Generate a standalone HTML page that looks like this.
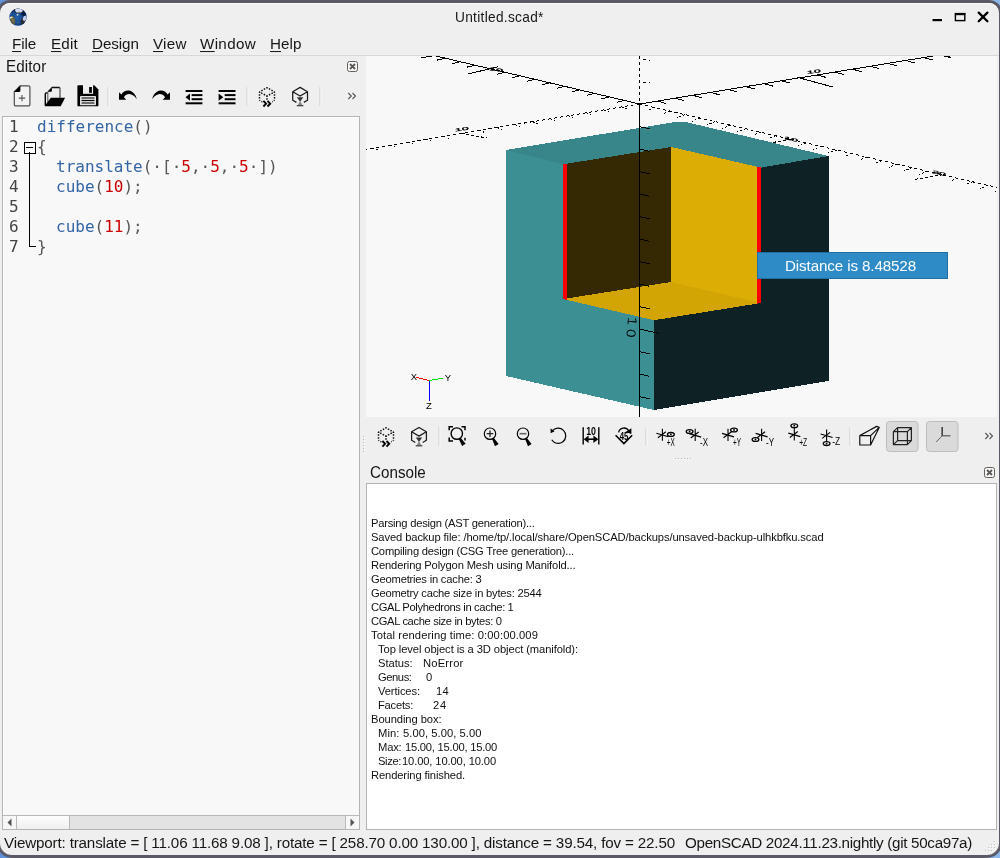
<!DOCTYPE html>
<html><head><meta charset="utf-8"><title>Untitled.scad*</title>
<style>
*{box-sizing:border-box;margin:0;padding:0}
html,body{width:1000px;height:858px;overflow:hidden}
body{background:linear-gradient(90deg,#5f90d8,#8db6ea);font-family:"Liberation Sans","DejaVu Sans",sans-serif;font-size:15px;color:#161616;position:relative}
.abs{position:absolute}
svg.abs{will-change:transform}
#frame{position:absolute;left:-3px;top:0;width:1005px;height:858px;background:#5b5965;border-radius:13px 13px 15px 15px}
#win{position:absolute;left:0;top:3px;width:999px;height:852px;background:#efefef;border-radius:10px 10px 12px 12px;overflow:hidden;box-shadow:inset 0 1px 0 #fbfbfb}
.t{position:absolute;white-space:pre;will-change:transform}
.t u{text-decoration:underline;text-underline-offset:2px;text-decoration-thickness:1px}
.code{font-family:"DejaVu Sans Mono","Liberation Mono",monospace;font-size:16px;line-height:19px}
.ln{color:#444}
.kw{color:#3465a4}.num{color:#cc0000}.pn{color:#555753}.ws{color:#555753}
</style></head><body>
<div id="frame"></div>
<div id="win"></div>
<svg class="abs" style="left:6px;top:5px" width="24" height="24" viewBox="6 5 24 24"><defs><radialGradient id="lg" cx="0.42" cy="0.55" r="0.6"><stop offset="0" stop-color="#2260aa"/><stop offset="0.6" stop-color="#18498f"/><stop offset="1" stop-color="#0a2555"/></radialGradient><clipPath id="lc"><circle cx="18" cy="17.1" r="8.7"/></clipPath></defs><circle cx="18" cy="17.1" r="8.7" fill="url(#lg)"/><g clip-path="url(#lc)"><ellipse cx="23.8" cy="13.6" rx="2.6" ry="2.4" fill="#0a1d48"/><ellipse cx="18.8" cy="10.2" rx="5.4" ry="2.9" fill="#1d2436"/><ellipse cx="18.9" cy="10.2" rx="3.7" ry="2.5" fill="#d3daf2"/><ellipse cx="19.2" cy="12.3" rx="1.6" ry="0.6" fill="#7d7850"/><ellipse cx="12.5" cy="20.4" rx="2.7" ry="4.4" transform="rotate(-14 12.5 20.4)" fill="#5f5c40"/><ellipse cx="12.9" cy="20" rx="1.3" ry="2.6" transform="rotate(-14 12.9 20)" fill="#77734e"/><ellipse cx="11" cy="17.6" rx="1.7" ry="0.8" transform="rotate(-20 11 17.6)" fill="#ecead6"/><ellipse cx="23.3" cy="20.4" rx="2.2" ry="3.9" transform="rotate(24 23.3 20.4)" fill="#2a2d33"/><ellipse cx="24.7" cy="18.3" rx="1.7" ry="2.7" transform="rotate(20 24.7 18.3)" fill="#c7cff0"/><circle cx="17.6" cy="14.8" r="0.95" fill="#d6d4c0"/><ellipse cx="18" cy="22.4" rx="0.8" ry="0.5" fill="#7e7a62"/><ellipse cx="10.9" cy="13.6" rx="0.5" ry="0.9" fill="#6f8fc8"/></g></svg>
<svg class="abs" style="left:925px;top:6px" width="70" height="22" viewBox="925 6 70 22"><rect x="932.5" y="19" width="9.5" height="2.2" fill="#000"/><rect x="955.4" y="13.6" width="9.4" height="7" fill="none" stroke="#000" stroke-width="1.4"/><rect x="954.9" y="13" width="10.4" height="2.2" fill="#000"/><path d="M978.7 12.6 L987.4 21.2 M987.4 12.6 L978.7 21.2" stroke="#000" stroke-width="2.3" stroke-linecap="round"/></svg>
<div class="abs" style="left:0;top:55px;width:999px;height:1px;background:#d8d8d8"></div>
<div class="abs" style="left:2px;top:116px;width:358px;height:714px;border:1px solid #b4b4b4;background:#f8f8f8;box-shadow:inset 1px 1px 0 #fff"></div>
<div class="abs" style="left:3px;top:815px;width:356px;height:14px;background:#e3e3e3;border-top:1px solid #b9b9b9"></div>
<div class="abs" style="left:3px;top:816px;width:14px;height:13px;background:#f7f7f7;border-right:1px solid #b9b9b9"></div>
<div class="abs" style="left:345px;top:816px;width:14px;height:13px;background:#f7f7f7;border-left:1px solid #b9b9b9"></div>
<div class="abs" style="left:17px;top:816px;width:53px;height:13px;background:linear-gradient(#fdfdfd,#efefef);border-right:1px solid #b9b9b9"></div>
<svg class="abs" style="left:3px;top:816px" width="356" height="13"><path d="M4.5 6.5 L8.5 2.5 V10.5Z M351.5 6.5 L347.5 2.5 V10.5Z" fill="#555"/></svg>
<div class="t code ln" style="left:9px;top:117.15px">1</div>
<div class="t code" style="left:37px;top:117.15px"><span class="kw">difference</span><span class="pn">()</span></div>
<div class="t code ln" style="left:9px;top:137.15px">2</div>
<div class="t code" style="left:37px;top:137.15px"><span class="pn">{</span></div>
<div class="t code ln" style="left:9px;top:157.15px">3</div>
<div class="t code" style="left:56.3px;top:157.15px"><span class="kw">translate</span><span class="pn">(</span><span class="ws">·</span><span class="pn">[</span><span class="ws">·</span><span class="num">5</span><span class="pn">,</span><span class="ws">·</span><span class="num">5</span><span class="pn">,</span><span class="ws">·</span><span class="num">5</span><span class="ws">·</span><span class="pn">])</span></div>
<div class="t code ln" style="left:9px;top:177.15px">4</div>
<div class="t code" style="left:56.3px;top:177.15px"><span class="kw">cube</span><span class="pn">(</span><span class="num">10</span><span class="pn">);</span></div>
<div class="t code ln" style="left:9px;top:197.15px">5</div>
<div class="t code ln" style="left:9px;top:217.15px">6</div>
<div class="t code" style="left:56.3px;top:217.15px"><span class="kw">cube</span><span class="pn">(</span><span class="num">11</span><span class="pn">);</span></div>
<div class="t code ln" style="left:9px;top:237.15px">7</div>
<div class="t code" style="left:37px;top:237.15px"><span class="pn">}</span></div>
<svg class="abs" style="left:20px;top:138px" width="20" height="114" shape-rendering="crispEdges"><g fill="none" stroke="#000" stroke-width="1"><rect x="4.5" y="4.5" width="11" height="11" fill="#fff"/><line x1="6" y1="9.5" x2="13" y2="9.5"/><line x1="9.5" y1="14" x2="9.5" y2="109"/><line x1="9" y1="108.5" x2="16" y2="108.5"/></g></svg>
<div class="abs" style="left:366px;top:483px;width:631px;height:347px;border:1px solid #b4b4b4;background:#fff"></div>
<svg class="abs" style="left:980px;top:838px" width="18" height="16" viewBox="980 838 18 16" shape-rendering="crispEdges" fill="#c2c2c2"><rect x="994" y="841" width="1" height="1"/><rect x="995" y="842" width="1" height="1" fill="#fcfcfc"/><rect x="991" y="844" width="1" height="1"/><rect x="992" y="845" width="1" height="1" fill="#fcfcfc"/><rect x="994" y="844" width="1" height="1"/><rect x="995" y="845" width="1" height="1" fill="#fcfcfc"/><rect x="988" y="847" width="1" height="1"/><rect x="989" y="848" width="1" height="1" fill="#fcfcfc"/><rect x="991" y="847" width="1" height="1"/><rect x="992" y="848" width="1" height="1" fill="#fcfcfc"/><rect x="994" y="847" width="1" height="1"/><rect x="995" y="848" width="1" height="1" fill="#fcfcfc"/><rect x="985" y="850" width="1" height="1"/><rect x="986" y="851" width="1" height="1" fill="#fcfcfc"/><rect x="988" y="850" width="1" height="1"/><rect x="989" y="851" width="1" height="1" fill="#fcfcfc"/><rect x="991" y="850" width="1" height="1"/><rect x="992" y="851" width="1" height="1" fill="#fcfcfc"/></svg>
<svg class="abs" style="left:366px;top:56px" width="631" height="361" viewBox="366 56 631 361" shape-rendering="crispEdges">
<rect x="366" y="56" width="631" height="361" fill="#f8f8f8"/>
<g stroke="#000" stroke-width="1" fill="none">
<line x1="639.5" y1="104.0" x2="436.0" y2="56.0"/>
<line x1="624.5" y1="100.5" x2="616.5" y2="102.4"/>
<line x1="609.6" y1="96.9" x2="601.6" y2="98.9"/>
<line x1="594.6" y1="93.4" x2="586.6" y2="95.3"/>
<line x1="579.7" y1="89.9" x2="571.7" y2="91.8"/>
<line x1="564.8" y1="86.4" x2="556.8" y2="88.3"/>
<line x1="549.8" y1="82.8" x2="541.8" y2="84.8"/>
<line x1="534.9" y1="79.3" x2="526.9" y2="81.2"/>
<line x1="519.9" y1="75.8" x2="511.9" y2="77.7"/>
<line x1="505.0" y1="72.3" x2="497.0" y2="74.2"/>
<line x1="498.0" y1="66.8" x2="468.0" y2="74.0"/>
<line x1="475.1" y1="65.2" x2="467.1" y2="67.1"/>
<line x1="460.1" y1="61.7" x2="452.1" y2="63.6"/>
<line x1="445.1" y1="58.2" x2="437.1" y2="60.1"/>
<line x1="639.5" y1="104.0" x2="933.0" y2="56.0"/>
<line x1="657.2" y1="101.1" x2="666.2" y2="103.5"/>
<line x1="675.0" y1="98.2" x2="684.0" y2="100.6"/>
<line x1="692.8" y1="95.3" x2="701.8" y2="97.7"/>
<line x1="710.5" y1="92.4" x2="719.5" y2="94.8"/>
<line x1="728.2" y1="89.5" x2="737.2" y2="91.9"/>
<line x1="746.0" y1="86.6" x2="755.0" y2="89.0"/>
<line x1="763.8" y1="83.7" x2="772.8" y2="86.1"/>
<line x1="781.5" y1="80.8" x2="790.5" y2="83.2"/>
<line x1="797.2" y1="77.3" x2="833.2" y2="87.1"/>
<line x1="817.0" y1="75.0" x2="826.0" y2="77.4"/>
<line x1="834.8" y1="72.1" x2="843.8" y2="74.5"/>
<line x1="852.5" y1="69.2" x2="861.5" y2="71.6"/>
<line x1="870.2" y1="66.3" x2="879.2" y2="68.7"/>
<line x1="888.0" y1="63.4" x2="897.0" y2="65.8"/>
<line x1="905.8" y1="60.5" x2="914.8" y2="62.9"/>
<line x1="923.5" y1="57.6" x2="932.5" y2="60.0"/>
<line x1="941.2" y1="54.7" x2="950.2" y2="57.1"/>
<line x1="639.5" y1="104.0" x2="366.0" y2="149.2" stroke-dasharray="3 3"/>
<line x1="621.7" y1="106.9" x2="626.7" y2="108.7" stroke-dasharray="2 2"/>
<line x1="603.9" y1="109.9" x2="608.9" y2="111.7" stroke-dasharray="2 2"/>
<line x1="586.1" y1="112.8" x2="591.1" y2="114.6" stroke-dasharray="2 2"/>
<line x1="568.3" y1="115.8" x2="573.3" y2="117.6" stroke-dasharray="2 2"/>
<line x1="550.5" y1="118.7" x2="555.5" y2="120.5" stroke-dasharray="2 2"/>
<line x1="532.7" y1="121.7" x2="537.7" y2="123.5" stroke-dasharray="2 2"/>
<line x1="514.9" y1="124.6" x2="519.9" y2="126.4" stroke-dasharray="2 2"/>
<line x1="497.1" y1="127.5" x2="502.1" y2="129.3" stroke-dasharray="2 2"/>
<line x1="479.3" y1="130.5" x2="484.3" y2="132.3" stroke-dasharray="2 2"/>
<line x1="461.5" y1="133.4" x2="487.5" y2="138.1" stroke-dasharray="3 2"/>
<line x1="443.7" y1="136.4" x2="448.7" y2="138.2" stroke-dasharray="2 2"/>
<line x1="425.9" y1="139.3" x2="430.9" y2="141.1" stroke-dasharray="2 2"/>
<line x1="408.1" y1="142.2" x2="413.1" y2="144.0" stroke-dasharray="2 2"/>
<line x1="390.3" y1="145.2" x2="395.3" y2="147.0" stroke-dasharray="2 2"/>
<line x1="372.5" y1="148.1" x2="377.5" y2="149.9" stroke-dasharray="2 2"/>
<line x1="639.5" y1="104.0" x2="997.0" y2="187.5" stroke-dasharray="3 3"/>
<line x1="654.6" y1="107.5" x2="646.6" y2="110.6" stroke-dasharray="2 2"/>
<line x1="669.8" y1="111.1" x2="661.8" y2="114.1" stroke-dasharray="2 2"/>
<line x1="685.0" y1="114.6" x2="677.0" y2="117.7" stroke-dasharray="2 2"/>
<line x1="700.1" y1="118.2" x2="692.1" y2="121.2" stroke-dasharray="2 2"/>
<line x1="715.2" y1="121.7" x2="707.2" y2="124.7" stroke-dasharray="2 2"/>
<line x1="730.4" y1="125.2" x2="722.4" y2="128.3" stroke-dasharray="2 2"/>
<line x1="745.5" y1="128.8" x2="737.5" y2="131.8" stroke-dasharray="2 2"/>
<line x1="760.7" y1="132.3" x2="752.7" y2="135.3" stroke-dasharray="2 2"/>
<line x1="775.9" y1="135.8" x2="767.9" y2="138.9" stroke-dasharray="2 2"/>
<line x1="791.0" y1="139.4" x2="763.0" y2="144.1" stroke-dasharray="3 2"/>
<line x1="806.1" y1="142.9" x2="798.1" y2="146.0" stroke-dasharray="2 2"/>
<line x1="821.3" y1="146.5" x2="813.3" y2="149.5" stroke-dasharray="2 2"/>
<line x1="836.5" y1="150.0" x2="828.5" y2="153.0" stroke-dasharray="2 2"/>
<line x1="851.6" y1="153.5" x2="843.6" y2="156.6" stroke-dasharray="2 2"/>
<line x1="866.8" y1="157.1" x2="858.8" y2="160.1" stroke-dasharray="2 2"/>
<line x1="881.9" y1="160.6" x2="873.9" y2="163.7" stroke-dasharray="2 2"/>
<line x1="897.0" y1="164.2" x2="889.0" y2="167.2" stroke-dasharray="2 2"/>
<line x1="912.2" y1="167.7" x2="904.2" y2="170.7" stroke-dasharray="2 2"/>
<line x1="927.4" y1="171.2" x2="919.4" y2="174.3" stroke-dasharray="2 2"/>
<line x1="942.5" y1="174.8" x2="914.5" y2="179.5" stroke-dasharray="3 2"/>
<line x1="957.7" y1="178.3" x2="949.7" y2="181.3" stroke-dasharray="2 2"/>
<line x1="972.8" y1="181.8" x2="964.8" y2="184.9" stroke-dasharray="2 2"/>
<line x1="988.0" y1="185.4" x2="980.0" y2="188.4" stroke-dasharray="2 2"/>
<line x1="1003.1" y1="188.9" x2="995.1" y2="192.0" stroke-dasharray="2 2"/>
<line x1="421.0" y1="57.5" x2="432.0" y2="56.5"/>
<line x1="944.0" y1="56.5" x2="951.0" y2="57.5"/>
<line x1="639.5" y1="56.0" x2="639.5" y2="104.0" stroke-dasharray="3 3"/>
<line x1="643.0" y1="59.5" x2="650.0" y2="60.5" stroke-dasharray="3 3"/>
<line x1="643.0" y1="82.0" x2="650.0" y2="83.0" stroke-dasharray="3 3"/>
</g>
<polygon points="506,150 675,122 686,122 828.5,156 761,167.6 671,147 563,164.3" fill="#38868a"/>
<polygon points="506,150 563,164.3 563,299 654,320.2 654,410 506,376" fill="#3c9094"/>
<polygon points="828.5,156 761,167.6 761,303 654,320.2 654,410 828.5,381" fill="#0e2125"/>
<polygon points="563,164.3 671,147 671,282 563,299" fill="#342903"/>
<polygon points="671,147 761,167.6 761,303 671,282" fill="#dcad04"/>
<polygon points="671,282 761,303 654,320.2 563,299" fill="#d2a404"/>
<polygon points="563,164.3 567,163.7 567,299.9 563,299" fill="#ff0000"/>
<polygon points="757,166.7 761,167.6 761,303 757,303.6" fill="#ff0000"/>
<g stroke="#000" stroke-width="1" fill="none">
<line x1="639.5" y1="104.0" x2="639.5" y2="417.0"/>
<line x1="640.0" y1="126.7" x2="649.5" y2="128.8"/>
<line x1="640.0" y1="149.2" x2="649.5" y2="151.3"/>
<line x1="640.0" y1="171.7" x2="649.5" y2="173.8"/>
<line x1="640.0" y1="194.2" x2="649.5" y2="196.3"/>
<line x1="640.0" y1="216.7" x2="649.5" y2="218.8"/>
<line x1="640.0" y1="239.2" x2="649.5" y2="241.3"/>
<line x1="640.0" y1="261.7" x2="649.5" y2="263.8"/>
<line x1="640.0" y1="284.2" x2="649.5" y2="286.3"/>
<line x1="640.0" y1="306.7" x2="649.5" y2="308.8"/>
<line x1="640.0" y1="329.2" x2="659.0" y2="333.4"/>
<line x1="640.0" y1="351.7" x2="649.5" y2="353.8"/>
<line x1="640.0" y1="374.2" x2="649.5" y2="376.3"/>
<line x1="640.0" y1="396.7" x2="649.5" y2="398.8"/>
</g>
<text font-family="DejaVu Sans,Liberation Sans,sans-serif" font-weight="200" fill="#000" stroke="#000" stroke-width="0.25" font-size="11.6" letter-spacing="2" transform="translate(628.2,316.2) rotate(94) scale(1.3,1)">10</text>
<text font-family="Liberation Sans,DejaVu Sans,sans-serif" fill="#000" font-size="9" transform="translate(489,70) rotate(8) scale(1.4,0.45)" stroke="#000" stroke-width="0.5">10</text>
<text font-family="Liberation Sans,DejaVu Sans,sans-serif" fill="#000" font-size="9" transform="translate(807,74) rotate(-8) scale(1.4,0.45)" stroke="#000" stroke-width="0.5">10</text>
<text font-family="Liberation Sans,DejaVu Sans,sans-serif" fill="#000" font-size="9" transform="translate(455,131.5) rotate(-8) scale(1.4,0.45)" stroke="#000" stroke-width="0.5">10</text>
<text font-family="Liberation Sans,DejaVu Sans,sans-serif" fill="#000" font-size="9" transform="translate(784,139) rotate(12) scale(1.4,0.45)" stroke="#000" stroke-width="0.5">10</text>
<text font-family="Liberation Sans,DejaVu Sans,sans-serif" fill="#000" font-size="9" transform="translate(932,173) rotate(12) scale(1.4,0.45)" stroke="#000" stroke-width="0.5">20</text>
<g stroke-width="1" fill="none">
<line x1="429.5" y1="380.5" x2="416.5" y2="377.5" stroke="#ff0000"/>
<line x1="429.5" y1="380.5" x2="443.5" y2="378.0" stroke="#00e000"/>
<line x1="429.5" y1="380.5" x2="429.5" y2="400.5" stroke="#0000ff"/>
</g>
<text font-family="Liberation Sans,DejaVu Sans,sans-serif" fill="#000" font-size="9.5" x="410.7" y="379.7">X</text>
<text font-family="Liberation Sans,DejaVu Sans,sans-serif" fill="#000" font-size="9.5" x="444.7" y="380.8">Y</text>
<text font-family="Liberation Sans,DejaVu Sans,sans-serif" fill="#000" font-size="9.5" x="426" y="408.6">Z</text>
</svg>
<div class="abs" style="left:757px;top:252px;width:191px;height:27px;background:#2f8bc6;border:1px solid #1f6ea4"></div>
<svg class="abs" style="left:0;top:56px" width="366" height="60" viewBox="0 56 366 60">
<rect x="347.5" y="61.5" width="10" height="10" rx="2" fill="#f6f6f6" stroke="#625f5c" stroke-width="1"/>
<path d="M350 64 l5 5 M355 64 l-5 5" stroke="#5a5754" stroke-width="1.8" fill="none"/>
<path d="M20.2 85.8 H28.4 a1.5 1.5 0 0 1 1.5 1.5 V104.4 a1.5 1.5 0 0 1 -1.5 1.5 H15.8 a1.5 1.5 0 0 1 -1.5 -1.5 V91.7 Z" fill="#f3f3f3" stroke="#4e4e4e" stroke-width="1.2"/>
<path d="M13.9 91.9 L20.4 85.4 V90.4 a1.5 1.5 0 0 1 -1.5 1.5 Z" fill="#000"/>
<path d="M22 94.9 V101.3 M18.8 98.1 H25.2" stroke="#555" stroke-width="1.1" fill="none"/>
<path d="M51.7 87.5 H59 a1 1 0 0 1 1 1 V98" fill="none" stroke="#555" stroke-width="1.3"/>
<path d="M51.7 87.5 H59.5" fill="none" stroke="#111" stroke-width="1.2"/>
<path d="M47.8 92 V103" fill="none" stroke="#666" stroke-width="1.2"/>
<path d="M47.3 91.8 L51.9 87 V90.8 a1 1 0 0 1 -1 1 Z" fill="#000"/>
<path d="M47.5 92.9 H46.3 a1 1 0 0 0 -1 1 V105.5" fill="none" stroke="#000" stroke-width="1.4"/>
<path d="M50.9 97.8 H65.1 L60.7 106.3 H45.2 a0.6 0.6 0 0 1 -0.4 -0.9 Z" fill="#000"/>
<path d="M78.3 85.2 H94.2 L98.4 89.4 V105.4 a0.9 0.9 0 0 1 -0.9 0.9 H78.3 a0.9 0.9 0 0 1 -0.9 -0.9 V86.1 a0.9 0.9 0 0 1 0.9 -0.9 Z" fill="#000"/>
<rect x="83" y="84.8" width="10.1" height="9" fill="#efefef"/>
<rect x="89.1" y="87" width="2.8" height="5.8" fill="#000"/>
<rect x="80" y="95.9" width="16" height="9.3" rx="0.8" fill="#e4e4e4"/>
<path d="M81.5 98 H94.5 M81.5 103 H94.5" stroke="#444" stroke-width="1.3"/><path d="M81.5 100.5 H94.5" stroke="#000" stroke-width="1.2"/>
<path d="M108 87 V106" stroke="#cbcbcb" stroke-width="1"/><path d="M109 87 V106" stroke="#fafafa" stroke-width="1"/>
<path d="M119 92.2 V99.7 H126.3 L123.9 97.3 C125.4 94.8 127.9 93.7 130.4 94.2 C133.2 94.8 135.3 96.8 136.7 99.3 C136.1 95 133 91.2 128.7 90.6 C125.7 90.3 123 91.6 121.4 94.6 Z" fill="#000"/>
<g transform="translate(289,0) scale(-1,1)"><path d="M119 92.2 V99.7 H126.3 L123.9 97.3 C125.4 94.8 127.9 93.7 130.4 94.2 C133.2 94.8 135.3 96.8 136.7 99.3 C136.1 95 133 91.2 128.7 90.6 C125.7 90.3 123 91.6 121.4 94.6 Z" fill="#000"/></g>
<rect x="185.6" y="90" width="16.8" height="2" fill="#000"/>
<rect x="218.6" y="90" width="16.9" height="2" fill="#000"/>
<rect x="191.6" y="94.1" width="10.8" height="2" fill="#000"/>
<rect x="224.7" y="94.1" width="10.8" height="2" fill="#000"/>
<rect x="191.6" y="98.2" width="10.8" height="2" fill="#000"/>
<rect x="224.7" y="98.2" width="10.8" height="2" fill="#000"/>
<rect x="185.6" y="102.3" width="16.8" height="2" fill="#000"/>
<rect x="218.6" y="102.3" width="16.9" height="2" fill="#000"/>
<path d="M185.5 97.15 L190 93.6 V100.7 Z" fill="#000"/>
<path d="M223.3 97.15 L218.6 93.6 V100.7 Z" fill="#000"/>
<path d="M247 87 V106" stroke="#cbcbcb" stroke-width="1"/><path d="M248 87 V106" stroke="#fafafa" stroke-width="1"/>
<g transform="translate(0,0)">
<g fill="none" stroke="#111" stroke-width="1.5" stroke-dasharray="1.5 1.4" stroke-dashoffset="0.7"><path d="M267 87.6 L274.5 92"/><path d="M274.5 92 V100.2"/><path d="M274.5 100.2 L267 104.6"/><path d="M267 87.6 L259.5 92"/><path d="M259.5 92 V100.2"/><path d="M259.5 100.2 L267 104.6"/><path d="M267 96 L259.5 92"/><path d="M267 96 L274.5 92"/><path d="M267 96 V104"/></g>
<rect x="262.5" y="100.2" width="9.5" height="7.5" fill="#efefef"/>
<path d="M263.4 100.9 L266.1 103.7 L263.4 106.5 M267.5 100.9 L270.2 103.7 L267.5 106.5" fill="none" stroke="#000" stroke-width="1.9"/>
</g>
<g transform="translate(0,0)">
<path d="M303.8 102.4 L307.5 100.2 V91.7 L300.1 87.4 L292.7 91.7 V100.2 L296.4 102.4 M292.7 91.7 L300.1 96 L307.5 91.7" fill="none" stroke="#1c1c1c" stroke-width="1.25" stroke-linejoin="round"/>
<path d="M296.9 97.3 H303.3 L300.1 101.8 Z" fill="#333"/>
<path d="M300.1 100.8 L302.3 105 H297.9 Z" fill="#888"/>
<path d="M296.8 105.7 H303.4" stroke="#222" stroke-width="1.1"/>
</g>
<path d="M320 87 V106" stroke="#cbcbcb" stroke-width="1"/><path d="M321 87 V106" stroke="#fafafa" stroke-width="1"/>
<path d="M348.3 93 l3 3 l-3 3 M352.5 93 l3 3 l-3 3" fill="none" stroke="#555" stroke-width="1.1"/>
</svg>
<svg class="abs" style="left:360px;top:418px" width="640" height="44" viewBox="360 418 640 44">
<rect x="363" y="436" width="1" height="1" fill="#b9b9b9"/><rect x="364" y="437" width="1" height="1" fill="#fbfbfb"/>
<rect x="363" y="439" width="1" height="1" fill="#b9b9b9"/><rect x="364" y="440" width="1" height="1" fill="#fbfbfb"/>
<rect x="363" y="442" width="1" height="1" fill="#b9b9b9"/><rect x="364" y="443" width="1" height="1" fill="#fbfbfb"/>
<rect x="363" y="445" width="1" height="1" fill="#b9b9b9"/><rect x="364" y="446" width="1" height="1" fill="#fbfbfb"/>
<rect x="363" y="448" width="1" height="1" fill="#b9b9b9"/><rect x="364" y="449" width="1" height="1" fill="#fbfbfb"/>
<rect x="363" y="451" width="1" height="1" fill="#b9b9b9"/><rect x="364" y="452" width="1" height="1" fill="#fbfbfb"/>
<rect x="675" y="458" width="1" height="1" fill="#b9b9b9"/><rect x="676" y="459" width="1" height="1" fill="#fbfbfb"/>
<rect x="678" y="458" width="1" height="1" fill="#b9b9b9"/><rect x="679" y="459" width="1" height="1" fill="#fbfbfb"/>
<rect x="681" y="458" width="1" height="1" fill="#b9b9b9"/><rect x="682" y="459" width="1" height="1" fill="#fbfbfb"/>
<rect x="684" y="458" width="1" height="1" fill="#b9b9b9"/><rect x="685" y="459" width="1" height="1" fill="#fbfbfb"/>
<rect x="687" y="458" width="1" height="1" fill="#b9b9b9"/><rect x="688" y="459" width="1" height="1" fill="#fbfbfb"/>
<rect x="690" y="458" width="1" height="1" fill="#b9b9b9"/><rect x="691" y="459" width="1" height="1" fill="#fbfbfb"/>
<g transform="translate(119,340.1)">
<g fill="none" stroke="#111" stroke-width="1.5" stroke-dasharray="1.5 1.4" stroke-dashoffset="0.7"><path d="M267 87.6 L274.5 92"/><path d="M274.5 92 V100.2"/><path d="M274.5 100.2 L267 104.6"/><path d="M267 87.6 L259.5 92"/><path d="M259.5 92 V100.2"/><path d="M259.5 100.2 L267 104.6"/><path d="M267 96 L259.5 92"/><path d="M267 96 L274.5 92"/><path d="M267 96 V104"/></g>
<rect x="262.5" y="100.2" width="9.5" height="7.5" fill="#efefef"/>
<path d="M263.4 100.9 L266.1 103.7 L263.4 106.5 M267.5 100.9 L270.2 103.7 L267.5 106.5" fill="none" stroke="#000" stroke-width="1.9"/>
</g>
<g transform="translate(118.9,340.1)">
<path d="M303.8 102.4 L307.5 100.2 V91.7 L300.1 87.4 L292.7 91.7 V100.2 L296.4 102.4 M292.7 91.7 L300.1 96 L307.5 91.7" fill="none" stroke="#1c1c1c" stroke-width="1.25" stroke-linejoin="round"/>
<path d="M296.9 97.3 H303.3 L300.1 101.8 Z" fill="#333"/>
<path d="M300.1 100.8 L302.3 105 H297.9 Z" fill="#888"/>
<path d="M296.8 105.7 H303.4" stroke="#222" stroke-width="1.1"/>
</g>
<path d="M439 427 V446" stroke="#cbcbcb" stroke-width="1"/><path d="M440 427 V446" stroke="#fafafa" stroke-width="1"/>
<path d="M449.2 430.2 V426.7 H453 M461.5 426.7 H465 V430.2 M449.2 437.5 V441 H453" fill="none" stroke="#000" stroke-width="1.5"/>
<path d="M465 437.8 V440.5" fill="none" stroke="#000" stroke-width="1.5"/>
<circle cx="456.8" cy="433.6" r="5.7" fill="none" stroke="#000" stroke-width="1.4"/>
<path d="M460.6 437.7 L465.6 443.8 L462.1 446 L458.8 438.9 Z" fill="#000"/>
<circle cx="490" cy="433.7" r="5.7" fill="none" stroke="#000" stroke-width="1.2"/>
<path d="M493.90 438.0 L498.60 444.0 L495.00 446.2 L492.10 439.1 Z" fill="#000"/>
<path d="M486.7 433.7 H493.3 M490 430.4 V437" stroke="#222" stroke-width="1.3"/>
<circle cx="523" cy="433.7" r="5.7" fill="none" stroke="#000" stroke-width="1.2"/>
<path d="M526.90 438.0 L531.60 444.0 L528.00 446.2 L525.10 439.1 Z" fill="#000"/>
<path d="M519.5 433.7 H526.5" stroke="#666" stroke-width="1.6"/>
<path d="M552.1 431.2 A7.6 7.6 0 1 1 551.7 439.8" fill="none" stroke="#000" stroke-width="1.2"/>
<path d="M550.5 428.6 L554.6 431.2 L550.7 433.2 Z" fill="#000"/>
<path d="M583.2 427.2 V444.5 M598.8 427.2 V444.5" stroke="#000" stroke-width="1.4"/>
<path d="M586 439.2 H596" stroke="#000" stroke-width="1.6"/>
<path d="M583.7 439.2 L588.6 435.4 V443 Z M598.3 439.2 L593.4 435.4 V443 Z" fill="#000"/>
<text font-family="Liberation Sans,DejaVu Sans,sans-serif" font-size="10.6" font-weight="bold" x="586.2" y="435.4" textLength="9.8" lengthAdjust="spacingAndGlyphs" fill="#000">10</text>
<path d="M615.6 435.2 L623.9 443.5 L632.2 435.2" fill="none" stroke="#000" stroke-width="1.6"/>
<path d="M618.6 432.3 A5.4 5.4 0 0 1 628.6 430.8" fill="none" stroke="#000" stroke-width="1.3"/>
<path d="M625.6 432 L631.4 428.2 L631.4 434 Z" fill="#000"/>
<text font-family="Liberation Sans,DejaVu Sans,sans-serif" font-size="10.4" font-weight="bold" x="619.8" y="440" textLength="8.6" lengthAdjust="spacingAndGlyphs" fill="#000">45</text>
<path d="M646 427 V446" stroke="#cbcbcb" stroke-width="1"/><path d="M647 427 V446" stroke="#fafafa" stroke-width="1"/>
<path d="M662.4 428.8 V440.8 M656.4 433.29999999999995 L668.4 436.79999999999995 M657.9 437.7 L665.9 431.7" fill="none" stroke="#000" stroke-width="1.1"/>
<ellipse cx="670.9" cy="434.4" rx="3.4" ry="1.9" fill="#efefef" stroke="#000" stroke-width="1.3"/><circle cx="670.9" cy="434.4" r="0.9" fill="#000"/>
<text font-family="Liberation Sans,DejaVu Sans,sans-serif" font-size="10" x="666.8" y="446" textLength="8" lengthAdjust="spacingAndGlyphs" fill="#000">+X</text>
<path d="M695.2 428.8 V441 M689.2 433.59999999999997 L701.2 437.09999999999997 M690.7 438.0 L698.7 432.0" fill="none" stroke="#000" stroke-width="1.1"/>
<ellipse cx="689.6" cy="431.5" rx="3.4" ry="1.9" fill="#efefef" stroke="#000" stroke-width="1.3"/><circle cx="689.6" cy="431.5" r="0.9" fill="#000"/>
<text font-family="Liberation Sans,DejaVu Sans,sans-serif" font-size="10" x="700" y="446" textLength="8" lengthAdjust="spacingAndGlyphs" fill="#000">-X</text>
<path d="M728 428.8 V441 M722 433.4 L734 436.9 M723.5 437.8 L731.5 431.8" fill="none" stroke="#000" stroke-width="1.1"/>
<ellipse cx="734" cy="430" rx="3.4" ry="1.9" fill="#efefef" stroke="#000" stroke-width="1.3"/><circle cx="734" cy="430" r="0.9" fill="#000"/>
<text font-family="Liberation Sans,DejaVu Sans,sans-serif" font-size="10" x="733" y="446" textLength="8" lengthAdjust="spacingAndGlyphs" fill="#000">+Y</text>
<path d="M761.6 428.8 V441 M755.6 433.4 L767.6 436.9 M757.1 437.8 L765.1 431.8" fill="none" stroke="#000" stroke-width="1.1"/>
<ellipse cx="755.5" cy="439.5" rx="3.4" ry="1.9" fill="#efefef" stroke="#000" stroke-width="1.3"/><circle cx="755.5" cy="439.5" r="0.9" fill="#000"/>
<text font-family="Liberation Sans,DejaVu Sans,sans-serif" font-size="10" x="766" y="446" textLength="8" lengthAdjust="spacingAndGlyphs" fill="#000">-Y</text>
<path d="M794.3 427 V440.6 M788.3 433.09999999999997 L800.3 436.59999999999997 M789.8 437.5 L797.8 431.5" fill="none" stroke="#000" stroke-width="1.1"/>
<ellipse cx="794.3" cy="425.7" rx="3.4" ry="1.9" fill="#efefef" stroke="#000" stroke-width="1.3"/><circle cx="794.3" cy="425.7" r="0.9" fill="#000"/>
<text font-family="Liberation Sans,DejaVu Sans,sans-serif" font-size="10" x="799.2" y="446" textLength="8" lengthAdjust="spacingAndGlyphs" fill="#000">+Z</text>
<path d="M826.6 429.6 V442 M820.6 434.0 L832.6 437.5 M822.1 438.40000000000003 L830.1 432.40000000000003" fill="none" stroke="#000" stroke-width="1.1"/>
<ellipse cx="826.6" cy="443.6" rx="3.4" ry="1.9" fill="#efefef" stroke="#000" stroke-width="1.3"/><circle cx="826.6" cy="443.6" r="0.9" fill="#000"/>
<text font-family="Liberation Sans,DejaVu Sans,sans-serif" font-size="10" x="832.2" y="445" textLength="8" lengthAdjust="spacingAndGlyphs" fill="#000">-Z</text>
<path d="M850 427 V446" stroke="#cbcbcb" stroke-width="1"/><path d="M851 427 V446" stroke="#fafafa" stroke-width="1"/>
<path d="M859.8 435.6 H870.6 V445 H859.8 Z M859.8 435.6 L876.6 426.4 L879.2 427.4 L870.6 435.6 M870.6 445 L879.2 427.4" fill="none" stroke="#111" stroke-width="1.2" stroke-linejoin="round"/>
<rect x="886.5" y="421.5" width="31.5" height="30" rx="3" fill="#dadada" stroke="#bdbdbd"/>
<path d="M893.4 431.6 H907.4 V444.6 H893.4 Z M897.6 427.6 H911.4 V440.6 H897.6 Z M893.4 431.6 L897.6 427.6 M907.4 431.6 L911.4 427.6 M907.4 444.6 L911.4 440.6 M893.4 444.6 L897.6 440.6" fill="none" stroke="#222" stroke-width="1.2" stroke-linejoin="round"/>
<rect x="926.5" y="421.5" width="31.5" height="30" rx="3" fill="#dadada" stroke="#bdbdbd"/>
<path d="M942.2 427 V436" stroke="#444" stroke-width="1.6"/><path d="M942.2 435.8 H950.5" stroke="#555" stroke-width="1.2"/><path d="M942.2 435.8 L936.2 442" stroke="#666" stroke-width="1"/>
<path d="M985.3 433 l3 3 l-3 3 M989.5 433 l3 3 l-3 3" fill="none" stroke="#555" stroke-width="1.1"/>
</svg>
<svg class="abs" style="left:980px;top:464px" width="18" height="16" viewBox="980 464 18 16"><rect x="984.5" y="467.5" width="10" height="10" rx="2" fill="#f6f6f6" stroke="#625f5c" stroke-width="1"/>
<path d="M987 470 l5 5 M992 470 l-5 5" stroke="#5a5754" stroke-width="1.8" fill="none"/></svg>
<div class="t" id="title" style="left:454.6px;top:8px;font-size:13.7px;line-height:20px;letter-spacing:0.303px;transform:scaleY(1.02);transform-origin:0 14px">Untitled.scad*</div>
<div class="t" id="m1" style="left:11.7px;top:34px;font-size:15.2px;line-height:20px;letter-spacing:-0.121px;transform:scaleY(1.015);transform-origin:0 15px"><u>F</u>ile</div>
<div class="t" id="m2" style="left:50.7px;top:34px;font-size:15.2px;line-height:20px;letter-spacing:0.203px;transform:scaleY(1.015);transform-origin:0 15px"><u>E</u>dit</div>
<div class="t" id="m3" style="left:92.3px;top:34px;font-size:15.2px;line-height:20px;letter-spacing:-0.080px;transform:scaleY(1.015);transform-origin:0 15px"><u>D</u>esign</div>
<div class="t" id="m4" style="left:152.8px;top:34px;font-size:15.2px;line-height:20px;letter-spacing:0.236px;transform:scaleY(1.015);transform-origin:0 15px"><u>V</u>iew</div>
<div class="t" id="m5" style="left:200.2px;top:34px;font-size:15.2px;line-height:20px;letter-spacing:0.328px;transform:scaleY(1.015);transform-origin:0 15px"><u>W</u>indow</div>
<div class="t" id="m6" style="left:270.3px;top:34px;font-size:15.2px;line-height:20px;letter-spacing:0.037px;transform:scaleY(1.015);transform-origin:0 15px"><u>H</u>elp</div>
<div class="t" id="ed" style="left:6.0px;top:57px;font-size:15.2px;line-height:20px;letter-spacing:0.102px;transform:scaleY(1.03);transform-origin:0 15px">Editor</div>
<div class="t" id="co" style="left:369.8px;top:463px;font-size:15.2px;line-height:20px;letter-spacing:0.009px;transform:scaleY(1.03);transform-origin:0 15px">Console</div>
<div class="t" id="st1" style="left:3.6px;top:833px;font-size:15.2px;line-height:20px;letter-spacing:-0.162px;transform:scaleY(1.015);transform-origin:0 15px">Viewport: translate = [ 11.06 11.68 9.08 ], rotate = [ 258.70 0.00 130.00 ], distance = 39.54, fov = 22.50</div>
<div class="t" id="st2" style="left:685px;top:833px;font-size:15.2px;line-height:20px;letter-spacing:-0.304px;transform:scaleY(1.015);transform-origin:0 15px">OpenSCAD 2024.11.23.nightly (git 50ca97a)</div>
<div class="t" id="tip" style="left:785.0px;top:256px;font-size:15.2px;line-height:20px;letter-spacing:-0.127px;color:#fff;transform:scaleY(0.995);transform-origin:0 15px">Distance is 8.48528</div>
<div class="t" id="c0_0" style="left:370.8px;top:513px;font-size:11.2px;line-height:20px;letter-spacing:-0.233px;color:#111">Parsing design (AST generation)...</div>
<div class="t" id="c1_0" style="left:370.8px;top:527px;font-size:11.2px;line-height:20px;letter-spacing:-0.111px;color:#111">Saved backup file: /home/tp/.local/share/OpenSCAD/backups/unsaved-backup-ulhkbfku.scad</div>
<div class="t" id="c2_0" style="left:370.8px;top:541px;font-size:11.2px;line-height:20px;letter-spacing:-0.205px;color:#111">Compiling design (CSG Tree generation)...</div>
<div class="t" id="c3_0" style="left:370.8px;top:555px;font-size:11.2px;line-height:20px;letter-spacing:-0.143px;color:#111">Rendering Polygon Mesh using Manifold...</div>
<div class="t" id="c4_0" style="left:370.8px;top:569px;font-size:11.2px;line-height:20px;letter-spacing:-0.207px;color:#111">Geometries in cache: 3</div>
<div class="t" id="c5_0" style="left:370.8px;top:583px;font-size:11.2px;line-height:20px;letter-spacing:-0.216px;color:#111">Geometry cache size in bytes: 2544</div>
<div class="t" id="c6_0" style="left:370.8px;top:597px;font-size:11.2px;line-height:20px;letter-spacing:-0.360px;color:#111">CGAL Polyhedrons in cache: 1</div>
<div class="t" id="c7_0" style="left:370.8px;top:611px;font-size:11.2px;line-height:20px;letter-spacing:-0.356px;color:#111">CGAL cache size in bytes: 0</div>
<div class="t" id="c8_0" style="left:370.8px;top:625px;font-size:11.2px;line-height:20px;letter-spacing:0.104px;color:#111">Total rendering time: 0:00:00.009</div>
<div class="t" id="c9_0" style="left:377.8px;top:639px;font-size:11.2px;line-height:20px;letter-spacing:-0.092px;color:#111">Top level object is a 3D object (manifold):</div>
<div class="t" id="c10_0" style="left:377.8px;top:653px;font-size:11.2px;line-height:20px;letter-spacing:-0.047px;color:#111">Status:</div>
<div class="t" id="c10_1" style="left:423.3px;top:653px;font-size:11.2px;line-height:20px;letter-spacing:0.190px;color:#111">NoError</div>
<div class="t" id="c11_0" style="left:377.8px;top:667px;font-size:11.2px;line-height:20px;letter-spacing:-0.430px;color:#111">Genus:</div>
<div class="t" id="c11_1" style="left:425.8px;top:667px;font-size:11.2px;line-height:20px;letter-spacing:1.266px;color:#111">0</div>
<div class="t" id="c12_0" style="left:377.8px;top:681px;font-size:11.2px;line-height:20px;letter-spacing:-0.101px;color:#111">Vertices:</div>
<div class="t" id="c12_1" style="left:436.3px;top:681px;font-size:11.2px;line-height:20px;letter-spacing:0.273px;color:#111">14</div>
<div class="t" id="c13_0" style="left:377.8px;top:695px;font-size:11.2px;line-height:20px;letter-spacing:-0.241px;color:#111">Facets:</div>
<div class="t" id="c13_1" style="left:433.3px;top:695px;font-size:11.2px;line-height:20px;letter-spacing:0.773px;color:#111">24</div>
<div class="t" id="c14_0" style="left:370.8px;top:709px;font-size:11.2px;line-height:20px;letter-spacing:-0.081px;color:#111">Bounding box:</div>
<div class="t" id="c15_0" style="left:377.8px;top:723px;font-size:11.2px;line-height:20px;letter-spacing:0.090px;color:#111">Min:</div>
<div class="t" id="c15_1" style="left:403.3px;top:723px;font-size:11.2px;line-height:20px;letter-spacing:0.046px;color:#111">5.00, 5.00, 5.00</div>
<div class="t" id="c16_0" style="left:377.8px;top:737px;font-size:11.2px;line-height:20px;letter-spacing:-0.188px;color:#111">Max:</div>
<div class="t" id="c16_1" style="left:405.3px;top:737px;font-size:11.2px;line-height:20px;letter-spacing:-0.233px;color:#111">15.00, 15.00, 15.00</div>
<div class="t" id="c17_0" style="left:377.8px;top:751px;font-size:11.2px;line-height:20px;letter-spacing:-0.375px;color:#111">Size:</div>
<div class="t" id="c17_1" style="left:402.3px;top:751px;font-size:11.2px;line-height:20px;letter-spacing:-0.127px;color:#111">10.00, 10.00, 10.00</div>
<div class="t" id="c18_0" style="left:370.8px;top:765px;font-size:11.2px;line-height:20px;letter-spacing:-0.127px;color:#111">Rendering finished.</div>
</body></html>
